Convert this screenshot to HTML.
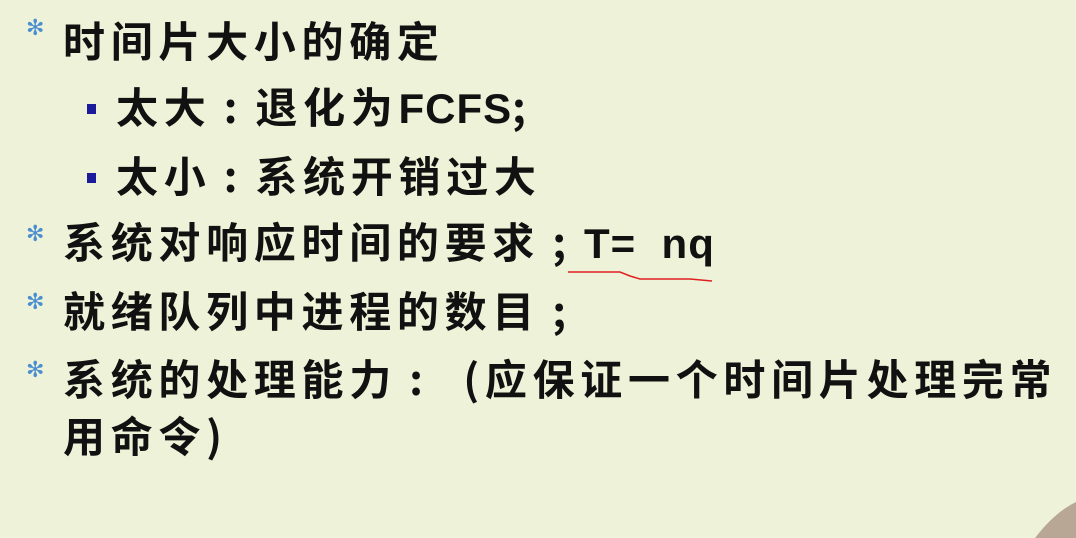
<!DOCTYPE html>
<html><head><meta charset="utf-8"><style>
html,body{margin:0;padding:0}
body{width:1076px;height:538px;background:#eef2d8;position:relative;overflow:hidden;font-family:"Noto Sans CJK SC","WenQuanYi Zen Hei",sans-serif;color:#111;text-spacing-trim:space-all}
.l{position:absolute;font-size:42px;line-height:50px;letter-spacing:5.7px;white-space:nowrap;font-weight:600}
.p{display:inline-block;width:44px;text-align:center}
.r{text-align:right}
.e{font-family:"Liberation Sans",sans-serif;font-weight:bold;letter-spacing:1px}
.s{position:absolute;color:#4a8fd0;font-size:22px;line-height:22px;font-weight:bold;font-family:"DejaVu Sans",sans-serif}
.q{position:absolute;width:9px;height:10px;background:#1a1a9a}
</style></head><body>
<div class="s" style="left:26px;top:18px">✻</div>
<div class="l" style="left:63px;top:15px">时间片大小的确定</div>
<div class="q" style="left:87px;top:104px"></div>
<div class="l" style="left:116px;top:81px">太大<span class="p">:</span>退化为<span class="e">FCFS</span>;</div>
<div class="q" style="left:87px;top:173px"></div>
<div class="l" style="left:116px;top:150px">太小<span class="p">:</span>系统开销过大</div>
<div class="s" style="left:26px;top:224px">✻</div>
<div class="l" style="left:63px;top:216px">系统对响应时间的要求<span class="p">;</span><span class="e">T= &nbsp;nq</span></div>
<div class="s" style="left:26px;top:292px">✻</div>
<div class="l" style="left:63px;top:285px">就绪队列中进程的数目<span class="p">;</span></div>
<div class="s" style="left:26px;top:360px">✻</div>
<div class="l" style="left:63px;top:353px">系统的处理能力<span class="p">:</span><span class="p r">(</span>应保证一个时间片处理完常</div>
<div class="l" style="left:63px;top:410px">用命令<span class="p" style="text-align:left">)</span></div>
<svg style="position:absolute;left:0;top:0" width="1076" height="538">
<path d="M568 272 L620 272 L630 276 L640 279 L690 279 L712 281" stroke="#e02020" stroke-width="1.5" fill="none"/>
<path d="M1035 538 Q1055 512 1076 502 L1076 538 Z" fill="#a08878" opacity="0.7"/>
</svg>
</body></html>
